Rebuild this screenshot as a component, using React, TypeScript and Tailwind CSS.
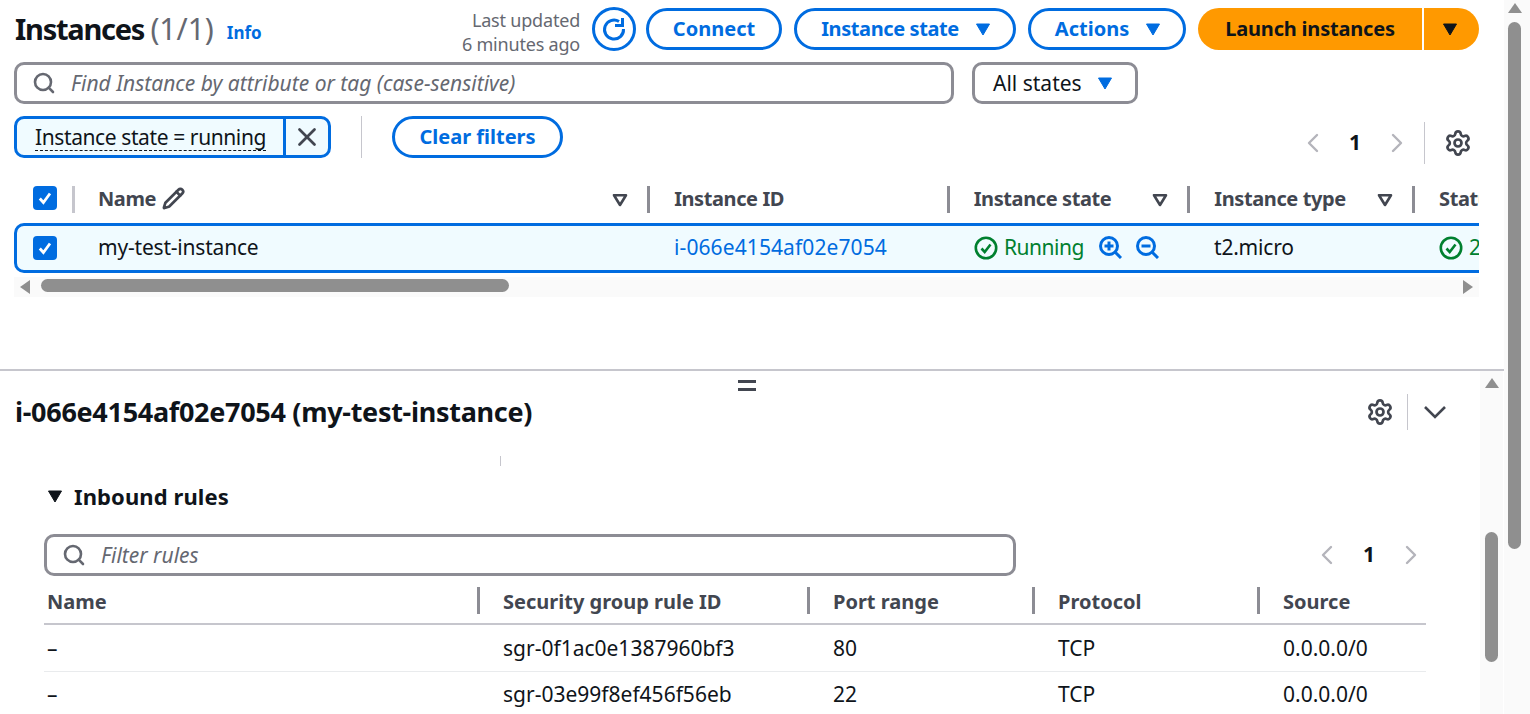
import { Settings, ChevronLeft, ChevronRight, Search, X, Pencil } from "lucide-react";

const BLUE = "#006ce0";
const GREEN = "#00802f";

function Caret({ color = BLUE, size = 16 }: { color?: string; size?: number }) {
  return (
    <svg width={size} height={size} viewBox="0 0 16 16" className="shrink-0">
      <path d="M1.5 3h13L8 14z" fill={color} stroke={color} strokeWidth="1" strokeLinejoin="round" />
    </svg>
  );
}

function SortIcon() {
  return (
    <svg width="16" height="14" viewBox="0 0 16 14" className="shrink-0">
      <path d="M2 2.2h12L8 12z" fill="none" stroke="#424650" strokeWidth="2.6" strokeLinejoin="round" />
    </svg>
  );
}

function Divider({ className = "" }: { className?: string }) {
  return <span className={"w-[3px] h-[27px] bg-[#8c8c94] shrink-0 " + className} />;
}

function Check() {
  return (
    <span className="w-6 h-6 rounded-[4px] bg-[#006ce0] flex items-center justify-center shrink-0">
      <svg width="16" height="16" viewBox="0 0 16 16">
        <path d="M2.8 8.5l3.6 4L13 3.5" fill="none" stroke="#fff" strokeWidth="2.8" />
      </svg>
    </span>
  );
}

function OutlineButton({ children, className = "" }: { children: React.ReactNode; className?: string }) {
  return (
    <button className={"h-[42px] rounded-[21px] border-[3px] border-[#006ce0] flex items-center justify-center gap-[16px] text-[#006ce0] text-[20px] font-bold " + className}>
      {children}
    </button>
  );
}

function StatusCheck() {
  return (
    <svg width="24" height="24" viewBox="0 0 24 24" className="shrink-0">
      <circle cx="12" cy="12" r="10.2" fill="none" stroke={GREEN} strokeWidth="2.6" />
      <path d="M7.5 12.5l3.2 3.5 5.8-7.5" fill="none" stroke={GREEN} strokeWidth="2.6" />
    </svg>
  );
}

function ZoomIcon({ plus }: { plus?: boolean }) {
  return (
    <svg width="24" height="24" viewBox="0 0 24 24" className="shrink-0">
      <circle cx="11" cy="11" r="8.5" fill="none" stroke={BLUE} strokeWidth="3" />
      <path d="M17 17l6 6" stroke={BLUE} strokeWidth="3" />
      <path d="M6.5 11h9" stroke={BLUE} strokeWidth="3" />
      {plus && <path d="M11 6.5v9" stroke={BLUE} strokeWidth="3" />}
    </svg>
  );
}

function Pager() {
  return (
    <div className="flex items-center gap-[19px]">
      <ChevronLeft size={32} strokeWidth={1.8} color="#b4b4bb" />
      <span className="text-[21px] font-bold text-[#0f141a] w-[14px] text-center">1</span>
      <ChevronRight size={32} strokeWidth={1.8} color="#b4b4bb" />
    </div>
  );
}

function Gear() {
  return <Settings size={28} strokeWidth={2.3} color="#424650" />;
}

function RuleRow({ id, port, className = "" }: { id: string; port: string; className?: string }) {
  return (
    <div className={"grid grid-cols-[459px_330px_225px_225px_1fr] h-[47px] items-center border-b border-[#e9ebed] text-[21px] text-[#0f141a] " + className}>
      <span className="pl-[3px]">–</span>
      <span>{id}</span>
      <span>{port}</span>
      <span>TCP</span>
      <span>0.0.0.0/0</span>
    </div>
  );
}

export default function App() {
  return (
    <div className="w-[1530px] h-[714px] overflow-hidden relative flex bg-white font-['Noto_Sans',sans-serif] text-[#0f141a]">
      <div className="w-[1504px] shrink-0 flex flex-col">
        {/* instances list */}
        <section className="h-[371px] shrink-0 border-b-2 border-[#c6c6cd] pl-[14px] pr-[25px]">
          <div className="flex items-center h-[42px] mt-2">
            <h1 className="pl-px text-[29px] font-bold tracking-[-1.25px] leading-none">
              Instances <span className="font-normal text-[#656871] text-[30px] tracking-[0px]">(1/1)</span>
            </h1>
            <a className="ml-[13px] mt-[8px] text-[17px] font-bold text-[#006ce0]">Info</a>
            <div className="ml-auto mt-[5px] text-right text-[18px] leading-[24px] text-[#656871] tracking-[-0.2px]">
              Last updated
              <br />6 minutes ago
            </div>
            <button className="ml-3 w-[44px] h-[44px] rounded-full border-[3px] border-[#006ce0] flex items-center justify-center">
              <svg width="28" height="28" viewBox="0 0 28 28">
                <path d="M19 6.5A9.5 9.5 0 1 0 23.5 14" fill="none" stroke={BLUE} strokeWidth="3" />
                <path d="M22.5 3v7.5h-7.5" fill="none" stroke={BLUE} strokeWidth="3" />
              </svg>
            </button>
            <OutlineButton className="ml-[10px] w-[136px]">Connect</OutlineButton>
            <OutlineButton className="ml-3 w-[222px] pl-[2px] tracking-[-0.4px]">
              Instance state <Caret />
            </OutlineButton>
            <OutlineButton className="ml-3 w-[158px] pl-[2px]">
              Actions <Caret />
            </OutlineButton>
            <button className="ml-3 w-[224px] h-[42px] rounded-l-[21px] bg-[#ff9900] text-[20px] font-bold tracking-[-0.2px]">Launch instances</button>
            <button className="ml-[2px] w-[55px] h-[42px] rounded-r-[21px] bg-[#ff9900] flex items-center justify-center pr-[4px]">
              <Caret color="#0f141a" />
            </button>
          </div>

          <div className="flex items-center mt-3 h-[42px]">
            <div className="w-[940px] h-full rounded-[10px] border-[3px] border-[#8c8c94] flex items-center pl-[15px] gap-[15px]">
              <Search size={24} strokeWidth={2.6} color="#656871" />
              <span className="italic text-[21px] pt-px text-[#656871]">Find Instance by attribute or tag (case-sensitive)</span>
            </div>
            <div className="ml-[18px] w-[166px] h-full rounded-[10px] border-[3px] border-[#8c8c94] flex items-center pl-[18px] gap-[15px] text-[21px]">
              <span className="pt-px">All states</span> <Caret />
            </div>
          </div>

          <div className="flex items-center mt-3 h-[42px]">
            <div className="w-[317px] h-full rounded-[10px] border-[3px] border-[#006ce0] bg-[#f0fbff] flex items-center">
              <span className="flex-1 pl-[18px]">
                <span className="text-[21px] tracking-[-0.4px] leading-[26px] border-b border-dashed border-[#0f141a] inline-block">Instance state = running</span>
              </span>
              <span className="w-[45px] h-full border-l-[3px] border-[#006ce0] flex items-center justify-center">
                <X size={30} strokeWidth={2.2} color="#424650" />
              </span>
            </div>
            <span className="ml-[30px] w-px h-full bg-[#c6c6cd]" />
            <OutlineButton className="ml-[30px] w-[171px]">Clear filters</OutlineButton>
            <div className="ml-auto flex items-center mt-[12px] pr-[7px]">
              <Pager />
              <span className="ml-[11px] w-px h-[42px] bg-[#c6c6cd]" />
              <span className="ml-[19px] flex"><Gear /></span>
            </div>
          </div>

          {/* table */}
          <div className="overflow-hidden mt-[28px]">
            <div className="flex items-center h-[27px] text-[20px] font-bold text-[#424650] tracking-[-0.4px]">
              <span className="ml-[19px] self-start"><Check /></span>
              <Divider className="ml-[15px] bg-[#c6c6cd]" />
              <span className="ml-[23px] -mt-[2px] flex items-center gap-[6px] w-[515px]">
                Name <Pencil size={23} strokeWidth={2.8} />
              </span>
              <SortIcon />
              <Divider className="ml-[19px]" />
              <span className="ml-[24px] -mt-[2px] w-[273px]">Instance ID</span>
              <Divider />
              <span className="ml-[24px] -mt-[2px] w-[179px]">Instance state</span>
              <SortIcon />
              <Divider className="ml-[19px]" />
              <span className="ml-[24px] -mt-[2px] w-[163px]">Instance type</span>
              <SortIcon />
              <Divider className="ml-[19px]" />
              <span className="ml-[24px] -mt-[2px] w-[40px] overflow-hidden">Status</span>
            </div>
            <div className="mt-[10px] h-[50px] w-[1500px] rounded-[10px] border-[3px] border-[#006ce0] bg-[#f0fbff] flex items-center text-[21px]">
              <span className="ml-[16px]"><Check /></span>
              <span className="ml-[41px] w-[576px] tracking-[-0.2px]">my-test-instance</span>
              <span className="w-[300px] text-[#006ce0] tracking-[0.1px]">i-066e4154af02e7054</span>
              <span className="w-[240px] flex items-center text-[#00802f]">
                <StatusCheck />
                <span className="ml-[6px] mr-[15px] w-[79px] tracking-[-0.5px]">Running</span>
                <span className="flex gap-[13px] -mt-[3px]">
                  <ZoomIcon plus />
                  <ZoomIcon />
                </span>
              </span>
              <span className="w-[225px] tracking-[-0.2px]">t2.micro</span>
              <span className="flex items-center gap-[6px] text-[#00802f]">
                <StatusCheck />
                2/2
              </span>
            </div>
            <div className="mt-1 h-5 bg-[#fafafa] flex items-center relative">
              <span className="ml-[6px] w-0 h-0 border-y-[7px] border-y-transparent border-r-[10px] border-r-[#8f8f8f]" />
              <span className="ml-[11px] w-[468px] h-[13px] -mt-[4px] rounded-full bg-[#8f8f8f]" />
              <span className="ml-auto mr-[6px] w-0 h-0 border-y-[7px] border-y-transparent border-l-[10px] border-l-[#8f8f8f]" />
            </div>
          </div>
        </section>

        {/* details panel */}
        <section className="flex-1 flex min-h-0">
          <div className="w-[1480px] shrink-0 pl-[14px] relative">
            <div className="flex flex-col items-center gap-[5px] absolute left-[738px] top-[9px]">
              <span className="w-[18px] h-[3px] bg-[#424650]" />
              <span className="w-[18px] h-[3px] bg-[#424650]" />
            </div>
            <div className="flex items-center h-[42px] mt-[20px] pr-[32px]">
              <h2 className="pl-px text-[27px] font-bold tracking-[-0.3px]">i-066e4154af02e7054 (my-test-instance)</h2>
              <div className="ml-auto flex items-center">
                <Gear />
                <span className="ml-[13px] mr-[14px] w-px h-[36px] bg-[#c6c6cd]" />
                <svg width="26" height="14" viewBox="0 0 26 14">
                  <path d="M3 2l10 10L23 2" fill="none" stroke="#424650" strokeWidth="2.6" />
                </svg>
              </div>
            </div>
            <span className="block ml-[486px] mt-[23px] w-px h-[10px] bg-[#c6c6cd]" />

            <div className="ml-[30px] mr-[54px] mt-[16px]">
              <div className="flex items-center h-[28px] pl-[3px]">
                <Caret color="#0f141a" />
                <h3 className="ml-[11px] text-[22px] font-bold tracking-[0.1px]">Inbound rules</h3>
              </div>
              <div className="flex items-center mt-[24px]">
                <div className="w-[972px] h-[42px] rounded-[10px] border-[3px] border-[#8c8c94] flex items-center pl-[15px] gap-[15px]">
                  <Search size={24} strokeWidth={2.6} color="#656871" />
                  <span className="italic text-[21px] pt-px text-[#656871]">Filter rules</span>
                </div>
                <div className="ml-auto -mr-px"><Pager /></div>
              </div>
              <div className="grid grid-cols-[459px_330px_225px_225px_1fr] h-[49px] pt-[5px] items-center border-b-2 border-[#c6c6cd] text-[20px] font-bold text-[#424650]">
                <span className="pl-[3px]">Name</span>
                <span className="relative">
                  <Divider className="absolute -left-[26px] top-0" />
                  Security group rule ID
                </span>
                <span className="relative">
                  <Divider className="absolute -left-[26px] top-0" />
                  Port range
                </span>
                <span className="relative">
                  <Divider className="absolute -left-[26px] top-0" />
                  Protocol
                </span>
                <span className="relative">
                  <Divider className="absolute -left-[26px] top-0" />
                  Source
                </span>
              </div>
              <RuleRow id="sgr-0f1ac0e1387960bf3" port="80" className="pt-[2px]" />
              <RuleRow id="sgr-03e99f8ef456f56eb" port="22" />
            </div>
          </div>

          {/* inner scrollbar */}
          <div className="w-[23px] shrink-0 bg-[#fafafa] relative">
            <span className="absolute left-[5px] top-[7px] w-0 h-0 border-x-[7px] border-x-transparent border-b-[10px] border-b-[#8f8f8f]" />
            <span className="absolute left-[5px] top-[161px] w-[13px] h-[130px] rounded-full bg-[#8f8f8f]" />
          </div>
        </section>
      </div>

      {/* page scrollbar */}
      <div className="w-[26px] shrink-0 bg-[#fafafa] relative">
        <span className="absolute left-[4px] top-[3px] w-0 h-0 border-x-[7px] border-x-transparent border-b-[10px] border-b-[#8f8f8f]" />
        <span className="absolute left-[4px] top-[22px] w-[13px] h-[527px] rounded-full bg-[#8f8f8f]" />
      </div>
    </div>
  );
}
